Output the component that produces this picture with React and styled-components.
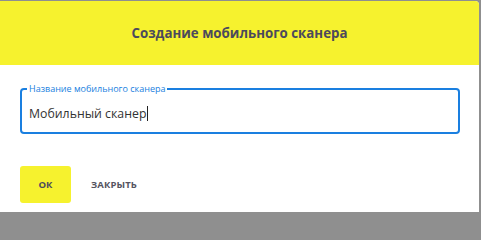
import styled, { createGlobalStyle } from 'styled-components';

const GlobalStyle = createGlobalStyle`
  html, body {
    margin: 0;
    padding: 0;
    height: 212px;
    overflow: hidden;
    background: #8f8f8f;
    font-family: "Open Sans", "Noto Sans", sans-serif;
  }
`;

const Dialog = styled.div`
  margin-top: 1px;
  width: 479px;
  height: 211px;
  background: #ffffff;
  border-radius: 0 4px 0 0;
  overflow: hidden;
  display: flex;
  flex-direction: column;
`;

const Header = styled.div`
  height: 64px;
  flex-shrink: 0;
  background: #f6f22e;
  display: flex;
  align-items: center;
  justify-content: center;
  font-size: 13.3px;
  font-weight: 700;
  color: #4c4a5c;
`;

const Body = styled.div`
  padding: 19px 19px 0 20px;
`;

const Field = styled.fieldset`
  margin: 0;
  height: 50px;
  box-sizing: border-box;
  border: 2px solid #1a7fe0;
  border-radius: 4px;
  padding: 0 7px;
  display: flex;
  align-items: center;
`;

const Legend = styled.legend`
  font-size: 9px;
  color: #1a7fe0;
  padding: 0 2px;
  margin-left: -2px;
  line-height: 10px;
`;

const Input = styled.div`
  font-size: 12.3px;
  color: #333;
  margin-top: 0;
  display: flex;
  align-items: center;
`;

const Caret = styled.span`
  width: 1px;
  height: 15px;
  background: #222;
  margin-left: 1px;
`;

const Actions = styled.div`
  display: flex;
  align-items: center;
  gap: 20px;
  padding: 32px 20px 0;
`;

const Button = styled.button`
  border: none;
  background: ${(p) => (p.$primary ? '#f6f22e' : 'transparent')};
  border-radius: 3px;
  height: 37px;
  min-width: ${(p) => (p.$primary ? '51px' : 'auto')};
  padding: 0;
  font-family: "Open Sans", "Noto Sans", sans-serif;
  font-size: 9.5px;
  font-weight: 700;
  color: ${(p) => (p.$primary ? '#4c4a5c' : '#55535f')};
  letter-spacing: 0.1px;
`;

export default function App() {
  return (
    <>
      <GlobalStyle />
      <Dialog>
        <Header>Создание мобильного сканера</Header>
        <Body>
          <Field>
            <Legend>Название мобильного сканера</Legend>
            <Input>
              Мобильный сканер<Caret />
            </Input>
          </Field>
        </Body>
        <Actions>
          <Button $primary>ОК</Button>
          <Button>ЗАКРЫТЬ</Button>
        </Actions>
      </Dialog>
    </>
  );
}
